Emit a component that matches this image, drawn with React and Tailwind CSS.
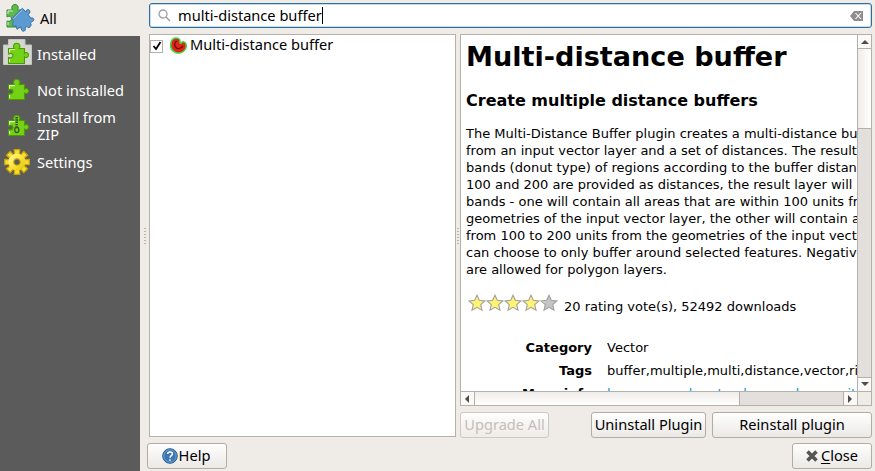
import React from "react";

const ui = "font-['Noto_Sans','Open_Sans',sans-serif]";
const doc = "font-['DejaVu_Sans',sans-serif]";

const PUZZLE =
  "M1.5 6.5H7.2C6 4.8 6.2 1.2 9.7 1.2S13.4 4.8 12.2 6.5H17.5V11.2C19.3 9.9 21.5 10.6 21.5 13S19.3 16.2 17.5 14.9V21.5H1.5V15.4C3.6 16.4 6 15.6 6 13.6S3.6 10.9 1.5 12Z";

function Puzzle({ zip }) {
  return (
    <svg viewBox="0 0 23 23" className="h-[23px] w-[23px]">
      <path d={PUZZLE} fill="#73d216" stroke="#4e9a06" strokeWidth="1.1" />
      <path d="M2.6 10.5V7.6H8M2.6 20V17" fill="none" stroke="#e4f7c4" strokeWidth="1.1" />
      {zip && (
        <g stroke="#39502b" fill="none">
          <path d="M9.7 3V14" strokeWidth="2.6" strokeDasharray="1.4 .9" />
          <rect x="7.8" y="13.5" width="4" height="5" rx="1.8" strokeWidth="1.3" />
        </g>
      )}
    </svg>
  );
}

function AllIcon() {
  return (
    <svg viewBox="0 0 30 30" className="h-[30px] w-[30px]">
      <path d="M2 7H7.500C6 4.500 7 1.500 10 1.500S14 4.500 12.500 7H17V24H2V18C5 19 6.500 17.500 6.500 15.500S4 12.500 2 14Z" fill="#5fba4c" stroke="#33883a" />
      <path d="M3 11V8H8M3 22V19" fill="none" stroke="#d9f2cf" />
      <path d="M17.300 5.300L20.800 8.800C21.300 6.200 24.300 5.800 24.800 8.200C25.100 9.600 24.300 11 23 11.500L26 15.200C28.800 13.800 30 17.500 27.300 18.500C25.600 19 25 20.300 26.300 22L24 25C22.200 23 19.800 23.600 20.300 25.800C20.800 29 16.600 29 16.300 26L15.800 23.800L12 26.300L10.800 22.800C8.800 24 6.200 21.800 7.600 19.800C9 18 8.500 17 6.600 15.800Z" fill="#5b9bd0" stroke="#3871a8" />
      <path d="M8.300 15.800L17.300 6.800" stroke="#9cc6ea" />
    </svg>
  );
}

function InstalledIcon() {
  return (
    <svg viewBox="0 0 29 26" className="h-[26px] w-[29px]">
      <path d="M5.500 .5H22V6H28.500V25.500H.5V6H5.500Z" fill="#d3d7cf" stroke="#c3c7be" />
      <g transform="translate(4 3)">
        <path d={PUZZLE} fill="#73d216" stroke="#4e9a06" strokeWidth="1.1" />
        <path d="M2.600 10.500V7.600H8M2.600 20V17" fill="none" stroke="#e4f7c4" />
      </g>
    </svg>
  );
}

function Gear() {
  return (
    <svg viewBox="-13 -13 26 26" className="h-[26px] w-[26px]">
      <defs>
        <linearGradient id="gear" x1="0" y1="0" x2="1" y2="1">
          <stop offset="0" stopColor="#fff8a8" />
          <stop offset=".5" stopColor="#fbe33a" />
          <stop offset="1" stopColor="#e0bd00" />
        </linearGradient>
      </defs>
      <g stroke="#c9a600" strokeWidth="1.200" fill="#f6dc35">
        {[0, 45, 90, 135, 180, 225, 270, 315].map((a) => (
          <path key={a} d="M-2.400 -7L-2.700 -12.300H2.700L2.400 -7Z" transform={`rotate(${a})`} />
        ))}
      </g>
      <circle r="8.600" fill="url(#gear)" />
      <circle r="3.100" fill="#5b5b5b" stroke="#b89600" strokeWidth="1.200" />
    </svg>
  );
}

function PluginIcon() {
  return (
    <svg viewBox="0 0 17 17" className="h-[17px] w-[17px]">
      <path d="M5.500 1C8.500 .6 10.200 2.200 10 4.500C9.900 5.600 10.200 6.300 11 6.200C11.800 5.200 12.600 4.500 14 4.900C16.500 5.800 16.800 9 15.500 12C13.500 15.500 9 17 5.500 15.500C1 13.500 .2 9.500 .9 6C1.400 3 3 1.300 5.500 1Z" fill="#e3231c" stroke="#3ddc3d" strokeWidth="1.500" />
      <path d="M7.500 4.200C4.500 4.500 4 7.500 5.300 9.700C6.800 12.300 10.800 12.300 13 8.800" fill="none" stroke="#651010" strokeWidth="1.300" />
    </svg>
  );
}

function Star({ off }) {
  return (
    <svg viewBox="0 0 18 18" className="h-[18px] w-[18px]">
      <path d="M9 1.200L11.300 6.300L16.900 6.900L12.700 10.600L14 16.200L9 13.300L4 16.200L5.300 10.600L1.100 6.900L6.700 6.300Z" fill={off ? "#c4c4c4" : "#fff373"} stroke="#a0a0a0" strokeWidth="1.100" />
      {off && <path d="M2.500 7.300L5 8.800" stroke="#f2e77a" />}
    </svg>
  );
}

function Grip() {
  return (
    <div className="flex flex-col gap-[2px]">
      {[0, 1, 2, 3, 4, 5].map((n) => (
        <div key={n} className="h-px w-[2px] bg-[#b9b3ad]" />
      ))}
    </div>
  );
}

function SideItem({ icon, children, className }) {
  return (
    <div className={`flex items-center ${className}`}>
      <div className="flex w-[37px] shrink-0 items-center pl-px">{icon}</div>
      <div>{children}</div>
    </div>
  );
}

function Button({ children, className }) {
  return (
    <div className={`flex h-[26px] items-center justify-center whitespace-nowrap rounded-[3px] border border-[#b2aca6] bg-linear-to-b from-[#fefefe] to-[#ebe9e6] pb-px ${className}`}>
      {children}
    </div>
  );
}

function Arrow({ d }) {
  return (
    <svg viewBox="0 0 8 8" className="h-2 w-2">
      <path d={d} fill="#4d4d4d" />
    </svg>
  );
}

function Row({ label, children, className = "" }) {
  return (
    <div className={`flex h-[23px] ${className}`}>
      <div className="w-[126px] shrink-0 text-right font-bold">{label}</div>
      <div className="ml-[15px] whitespace-nowrap">{children}</div>
    </div>
  );
}

const description = [
  "The Multi-Distance Buffer plugin creates a multi-distance buffer",
  "from an input vector layer and a set of distances. The result is",
  "bands (donut type) of regions according to the buffer distances. If",
  "100 and 200 are provided as distances, the result layer will have two",
  "bands - one will contain all areas that are within 100 units from the",
  "geometries of the input vector layer, the other will contain areas",
  "from 100 to 200 units from the geometries of the input vector layer. You",
  "can choose to only buffer around selected features. Negative distances",
  "are allowed for polygon layers.",
];

export default function App() {
  return (
    <div className={`flex h-[471px] w-[875px] overflow-hidden bg-[#efebe7] text-[14.6px] leading-[17px] text-black ${ui}`}>
      <aside className="flex w-[140px] shrink-0 flex-col bg-[#5b5b5b] text-white">
        <SideItem className="h-9 bg-[#efebe7] text-black" icon={<div className="pl-1"><AllIcon /></div>}>
          <span className="ml-[3px]">All</span>
        </SideItem>
        <SideItem className="h-9" icon={<div className="pb-[5px] pl-[2px]"><InstalledIcon /></div>}>Installed</SideItem>
        <SideItem className="h-9" icon={<div className="pb-px pl-[6px]"><Puzzle /></div>}>Not installed</SideItem>
        <SideItem className="h-9" icon={<div className="pb-px pl-[6px]"><Puzzle zip /></div>}>Install from<br />ZIP</SideItem>
        <SideItem className="h-9" icon={<div className="pl-[3px]"><Gear /></div>}>Settings</SideItem>
      </aside>

      <main className="flex min-w-0 grow flex-col pr-[3px] pt-[3px]">
        <div className="ml-[9px] flex h-[25px] shrink-0 items-center rounded-[3px] border border-[#2e6f9e] bg-white shadow-[inset_0_0_0_1px_#c9dbe7]">
          <svg viewBox="0 0 13 13" className="ml-2 h-[13px] w-[13px]">
            <circle cx="5" cy="5" r="4" fill="none" stroke="#a0a0a0" strokeWidth="1.300" />
            <path d="M8 8L12 12" stroke="#a0a0a0" strokeWidth="1.600" />
          </svg>
          <span className="ml-[7px]">multi-distance buffer</span>
          <span className="h-[17px] w-px bg-black" />
          <svg viewBox="0 0 13 10" className="ml-auto mr-[8px] h-[10px] w-[13px]">
            <path d="M0 5L4 0H13V10H4Z" fill="#8f8f8f" />
            <path d="M5.500 2L11 8M11 2L5.500 8" stroke="#fff" strokeWidth="1.100" />
          </svg>
        </div>

        <div className="mt-[6px] flex h-[403px] shrink-0">
          <div className="flex w-[9px] shrink-0 items-center justify-center"><Grip /></div>
          <section className="w-[307px] shrink-0 border border-[#b6b0aa] bg-white">
            <div className="flex h-[20px] items-center">
              <div className="mt-[2px] flex h-[13px] w-[13px] items-center justify-center border border-[#b4afaa] bg-white">
                <svg viewBox="0 0 10 10" className="h-[10px] w-[10px]">
                  <path d="M1.500 5L4 8L8.500 1" fill="none" stroke="#000" strokeWidth="1.800" />
                </svg>
              </div>
              <div className="ml-[7px] mt-px"><PluginIcon /></div>
              <span className="mb-[2px] ml-[3px]">Multi-distance buffer</span>
            </div>
          </section>

          <div className="flex w-[4px] shrink-0 items-center justify-center"><Grip /></div>
          <section className="flex w-[412px] flex-col">
            <div className={`flex h-[372px] flex-col border border-[#b6b0aa] bg-white ${doc}`}>
              <div className="flex h-[356px]">
                <div className="h-[356px] w-[396px] overflow-hidden pl-[5px] text-[13px] leading-[17px]">
                  <h1 className="mt-[5px] whitespace-nowrap text-[27.100px] font-bold leading-[33px]">Multi-distance buffer</h1>
                  <h2 className="mt-[18px] whitespace-nowrap text-[16px] font-bold leading-[19px]">Create multiple distance buffers</h2>
                  <div className="mt-[15px] whitespace-nowrap">
                    {description.map((line) => <div key={line}>{line}</div>)}
                  </div>
                  <div className="mt-[16px] flex h-[20px] items-center">
                    <div className="mb-[2px] ml-[2px] flex">
                      <Star /><Star /><Star /><Star /><Star off />
                    </div>
                    <span className="ml-[6px] mt-[5px]">20 rating vote(s), 52492 downloads</span>
                  </div>
                  <Row label="Category" className="mt-[25px]">Vector</Row>
                  <Row label="Tags">buffer,multiple,multi,distance,vector,ring</Row>
                  <Row label="More info">
                    <span className="whitespace-pre text-[#0099dd]">homepage   bug tracker   code repository</span>
                  </Row>
                </div>
                <div className="flex w-[14px] flex-col border-l border-[#b6b0aa] bg-[#e2dfdc]">
                  <div className="flex h-[14px] items-center justify-center border-b border-[#b6b0aa] bg-[#faf9f8]"><Arrow d="M0 6L4 2L8 6Z" /></div>
                  <div className="h-[80px] border-b border-[#b6b0aa] bg-linear-to-r from-[#efedeb] to-white" />
                  <div className="mt-auto flex h-[14px] items-center justify-center border-t border-[#b6b0aa] bg-[#faf9f8] pb-[2px]"><Arrow d="M0 2L4 6L8 2Z" /></div>
                </div>
              </div>
              <div className="flex h-[14px] border-t border-[#b6b0aa] bg-[#e2dfdc]">
                <div className="flex w-[14px] items-center justify-center border-r border-[#b6b0aa] bg-[#faf9f8] pr-[2px]"><Arrow d="M6 0L2 4L6 8Z" /></div>
                <div className="w-[265px] border-r border-[#b6b0aa] bg-linear-to-b from-[#efedeb] to-white" />
                <div className="ml-auto flex w-[14px] items-center justify-center border-l border-[#b6b0aa] bg-[#faf9f8] pr-[2px]"><Arrow d="M2 0L6 4L2 8Z" /></div>
                <div className="w-[14px] border-l border-[#b6b0aa] bg-[#efebe7]" />
              </div>
            </div>
            <div className="mt-[6px] flex">
              <Button className="w-[89px] border-[#cfcac5] from-[#f4f2f0] to-[#efebe7] text-[#c3bfbb]">Upgrade All</Button>
              <Button className="ml-[42px] w-[115px]">Uninstall Plugin</Button>
              <Button className="ml-[6px] w-[160px]">Reinstall plugin</Button>
            </div>
          </section>
        </div>

        <div className="ml-[7px] mt-[6px] flex justify-between">
          <Button className="w-[80px] pr-[2px]">
            <svg viewBox="0 0 16 16" className="h-4 w-4">
              <circle cx="8" cy="8" r="7.300" fill="#3b78b3" stroke="#235a91" />
              <circle cx="8" cy="8" r="6.200" fill="none" stroke="#7ba9d3" strokeWidth=".8" />
              <path d="M5.600 6C5.700 3.200 10.400 3.200 10.400 6C10.400 7.700 8 7.700 8 9.800M8 11.200V12.800" fill="none" stroke="#fff" strokeWidth="1.500" />
            </svg>
            <span className="ml-px">Help</span>
          </Button>
          <Button className="w-[80px]">
            <svg viewBox="0 0 12 12" className="h-3 w-3">
              <path d="M1.500 1.500L10.500 10.500M10.500 1.500L1.500 10.500" stroke="#555" strokeWidth="3.600" />
            </svg>
            <span className="ml-[3px]"><span className="underline underline-offset-2">C</span>lose</span>
          </Button>
        </div>
      </main>
    </div>
  );
}
